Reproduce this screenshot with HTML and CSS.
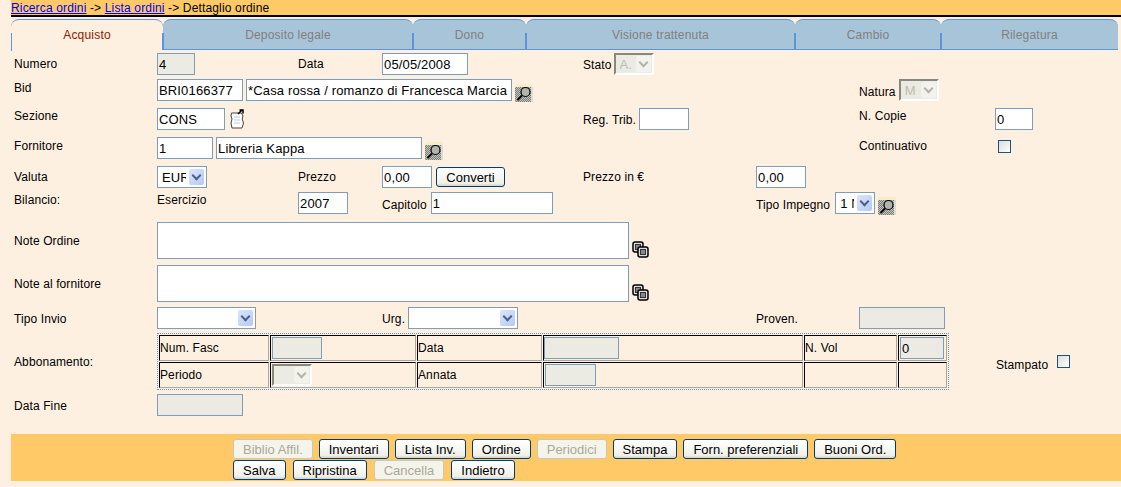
FILE: index.html
```html
<!DOCTYPE html>
<html lang="it">
<head>
    <meta charset="UTF-8">
    <title>Dettaglio ordine</title>
    <link rel="stylesheet" href="styles.css">
</head>
<body>
    <svg class="defs" width="0" height="0">
        <pattern id="dots" width="2" height="2" patternUnits="userSpaceOnUse">
            <rect width="2" height="2" fill="#c4c4be"/>
            <rect width="1" height="1" fill="#7d7d78"/>
            <rect x="1" y="1" width="1" height="1" fill="#7d7d78"/>
        </pattern>
        <symbol id="lens" viewBox="0 0 18 18">
            <rect width="18" height="18" fill="url(#dots)"/>
            <rect width="18" height="3" fill="#f5eec8"/>
            <rect x="16" y="3" width="2" height="15" fill="#dcdcd4"/>
            <circle cx="10.500" cy="8" r="4.500" fill="#b4b4ae" stroke="#000" stroke-width="1.200"/>
            <path d="M7 11.500 2.500 16" stroke="#000" stroke-width="2"/>
        </symbol>
        <symbol id="note" viewBox="0 0 15 20">
            <path d="M1.500 4h10l1.500 3-.8 3 1.300 4-1.500 5H2l-1-5 1-4-1-3z" fill="#fff" stroke="#444"/>
            <path d="M4 8h6M4 11h6M4 14h6" stroke="#bcd" stroke-width="1"/>
            <path d="M8 5 12 1M9.500 1H13v3.500" stroke="#000" stroke-width="1.500" fill="none"/>
        </symbol>
        <symbol id="copy" viewBox="0 0 17 17">
            <rect x="1" y="1" width="10" height="10" rx="2" fill="#ddd" stroke="#000" stroke-width="1.500"/>
            <rect x="3.500" y="3.500" width="5" height="5" fill="#888" stroke="#333"/>
            <rect x="6" y="6" width="10" height="10" rx="2" fill="#ddd" stroke="#000" stroke-width="1.500"/>
            <rect x="8.500" y="8.500" width="5" height="5" fill="#888" stroke="#333"/>
        </symbol>
    </svg>

    <div class="crumbs">
        <a href="#">Ricerca ordini</a> -&gt; <a href="#">Lista ordini</a> -&gt; Dettaglio ordine
    </div>

    <div class="tabs">
        <div class="tab active t1">Acquisto</div>
        <div class="tab t2">Deposito legale</div>
        <div class="tab t3">Dono</div>
        <div class="tab t4">Visione trattenuta</div>
        <div class="tab t5">Cambio</div>
        <div class="tab t6">Rilegatura</div>
    </div>

    <form class="form">
        <!-- riga 1 -->
        <label class="c1 r1">Numero</label>
        <div class="c2 r1"><input class="w38 off" value="4"></div>
        <label class="c3 r1">Data</label>
        <div class="c4 r1"><input class="w86" value="05/05/2008"></div>
        <div class="c5 r1 line snug"><label>Stato</label><span class="sel off w40"><select disabled><option>A.A</option></select><i class="arrow"></i></span></div>

        <!-- riga 2 -->
        <label class="c1 r2">Bid</label>
        <div class="c2-5 r2 line">
            <input class="w86" value="BRI0166377">
            <input class="w266" value="*Casa rossa / romanzo di Francesca Marcia">
            <svg class="lens"><use href="#lens"/></svg>
        </div>
        <div class="c7 r2 line low"><label>Natura</label><span class="sel off w40"><select disabled><option>M</option></select><i class="arrow"></i></span></div>

        <!-- riga 3 -->
        <label class="c1 r3">Sezione</label>
        <div class="c2 r3 line"><input class="w68" value="CONS"><svg class="note"><use href="#note"/></svg></div>
        <div class="c5 r3 line"><label>Reg. Trib.</label><input class="w50"></div>
        <label class="c7 r3">N. Copie</label>
        <div class="c8 r3"><input class="w38" value="0"></div>

        <!-- riga 4 -->
        <label class="c1 r4">Fornitore</label>
        <div class="c2-5 r4 line">
            <input class="w56" value="1">
            <input class="w206" value="Libreria Kappa">
            <svg class="lens"><use href="#lens"/></svg>
        </div>
        <label class="c7 r4">Continuativo</label>
        <div class="c8 r4"><span class="check"></span></div>

        <!-- riga 5 -->
        <label class="c1 r5">Valuta</label>
        <div class="c2 r5"><span class="sel w50"><select><option>EUR</option></select><i class="arrow"></i></span></div>
        <label class="c3 r5">Prezzo</label>
        <div class="c4 r5 line"><input class="w50" value="0,00"><button type="button" class="btn conv">Converti</button></div>
        <label class="c5 r5">Prezzo in €</label>
        <div class="c6 r5"><input class="w50" value="0,00"></div>

        <!-- riga 6 -->
        <label class="c1 r6">Bilancio:</label>
        <label class="c2 r6">Esercizio</label>
        <div class="c3 r6"><input class="w50" value="2007"></div>
        <div class="c4 r6 line low wide1"><label>Capitolo</label><input class="w122" value="1"></div>
        <div class="c6-7 r6 line low wide2"><label>Tipo Impegno</label><span class="sel w40"><select><option>1 N</option></select><i class="arrow"></i></span><svg class="lens"><use href="#lens"/></svg></div>

        <!-- note -->
        <label class="c1 r7 mid">Note Ordine</label>
        <div class="c2-5 r7 line"><textarea></textarea><svg class="copy"><use href="#copy"/></svg></div>
        <label class="c1 r8 mid">Note al fornitore</label>
        <div class="c2-5 r8 line"><textarea></textarea><svg class="copy"><use href="#copy"/></svg></div>

        <!-- invio -->
        <label class="c1 r9">Tipo Invio</label>
        <div class="c2 r9"><span class="sel w99"><select><option></option></select><i class="arrow"></i></span></div>
        <div class="c4 r9 line"><label>Urg.</label><span class="sel w110"><select><option></option></select><i class="arrow"></i></span></div>
        <label class="c6 r9">Proven.</label>
        <div class="c7 r9"><input class="w86 off"></div>

        <!-- abbonamento -->
        <label class="c1 r10 mid">Abbonamento:</label>
        <div class="c2-7 r10">
            <table class="abbo">
                <tr>
                    <td class="k1">Num. Fasc</td>
                    <td class="k2"><input class="w50 off"></td>
                    <td class="k3">Data</td>
                    <td class="k4"><input class="w75 off"></td>
                    <td class="k5">N. Vol</td>
                    <td class="k6"><input class="w44 off" value="0"></td>
                </tr>
                <tr>
                    <td>Periodo</td>
                    <td><span class="sel off w40"><select disabled><option></option></select><i class="arrow"></i></span></td>
                    <td>Annata</td>
                    <td><input class="w51 off"></td>
                    <td></td>
                    <td></td>
                </tr>
            </table>
        </div>
        <div class="c8 r10 line stamp"><label>Stampato</label><span class="check"></span></div>

        <label class="c1 r11">Data Fine</label>
        <div class="c2 r11"><input class="w86 off"></div>
    </form>

    <div class="actions">
        <div class="btn-row">
            <button type="button" class="btn" disabled>Biblio Affil.</button>
            <button type="button" class="btn">Inventari</button>
            <button type="button" class="btn">Lista Inv.</button>
            <button type="button" class="btn">Ordine</button>
            <button type="button" class="btn" disabled>Periodici</button>
            <button type="button" class="btn">Stampa</button>
            <button type="button" class="btn">Forn. preferenziali</button>
            <button type="button" class="btn">Buoni Ord.</button>
        </div>
        <div class="btn-row second">
            <button type="button" class="btn">Salva</button>
            <button type="button" class="btn">Ripristina</button>
            <button type="button" class="btn" disabled>Cancella</button>
            <button type="button" class="btn">Indietro</button>
        </div>
    </div>
</body>
</html>
```

FILE: styles.css
```css
* {
    box-sizing: border-box;
}
html, body {
    height: 100%;
}
body {
    margin: 0 0 0 11px;
    background: #fef0e0;
    font-family: "Liberation Sans", Arial, sans-serif;
    font-size: 12px;
    letter-spacing: 0.1px;
    color: #000;
    overflow: hidden;
}
.defs {
    display: block;
    height: 0;
}

/* testata */
.crumbs {
    height: 18px;
    line-height: 16px;
    letter-spacing: 0.15px;
    background: linear-gradient(#fec966 15px, #000 15px, #000 17px, #fef0e0 17px);
}
.crumbs a {
    color: #0000ee;
}

/* tab */
.tabs {
    display: flex;
    height: 32px;
    padding-top: 1px;
}
.tab {
    position: relative;
    height: 31px;
    line-height: 30px;
    letter-spacing: 0.2px;
    text-align: center;
    background: #a8c4d8;
    color: #808080;
    border-top: 1px solid #5b96dc;
    border-bottom: 1px solid #5b96dc;
    border-radius: 8px 8px 0 0;
}
.tab::before {
    content: "";
    position: absolute;
    left: -1px;
    top: 13px;
    bottom: -1px;
    width: 2px;
    background: #5b96dc;
}
.tab.active {
    background: #fef0e0;
    color: #8b1a00;
    border-bottom: 0;
}
.tab.t1::before {
    left: 0;
    width: 1px;
}
.t1 { width: 152px; }
.t2 { width: 250px; }
.t3 { width: 113px; }
.t4 { width: 269px; }
.t5 { width: 146px; }
.t6 { width: 177px; }

/* griglia del form */
.form {
    display: grid;
    grid-template-columns: 143px 141px 84px 201px 173px 103px 136px 115px;
    grid-template-rows: 26px 29px 29px 29px 26px 30px 43px 42px 26px 61px 40px;
    padding-left: 3px;
    padding-top: 3px;
}
.form label {
    line-height: 17px;
    white-space: nowrap;
}
.c1 { grid-column: 1; }
.c2 { grid-column: 2; }
.c3 { grid-column: 3; }
.c4 { grid-column: 4 / span 2; }
.c5 { grid-column: 5; }
.c6 { grid-column: 6; }
.c7 { grid-column: 7; }
.c8 { grid-column: 8; }
.c2-5 { grid-column: 2 / span 4; }
.c6-7 { grid-column: 6 / span 2; }
.c2-7 { grid-column: 2 / span 6; }
.r1 { grid-row: 1; }
.r2 { grid-row: 2; }
.r3 { grid-row: 3; }
.r4 { grid-row: 4; }
.r5 { grid-row: 5; }
.r6 { grid-row: 6; }
.r7 { grid-row: 7; }
.r8 { grid-row: 8; }
.r9 { grid-row: 9; }
.r10 { grid-row: 10; }
.r11 { grid-row: 11; }
.form > label { padding-top: 3px; }
.form > label.r2, .form > label.r4 { padding-top: 1px; }
.form > label.r3, .form > label.r6 { padding-top: 0; }
.form > label.r9, .form > label.r11 { padding-top: 4px; }
.form > label.r7, .form > label.r8 { padding-top: 11px; }
.form > label.r10 { padding-top: 21px; }
.line {
    display: flex;
    align-items: flex-start;
    gap: 3px;
}
.line > label {
    padding-top: 4px;
}
.line.low > label {
    padding-top: 5px;
}
.line.snug > label { margin-right: -1px; }
.line.wide1 > label { margin-right: 1px; }
.line.wide2 > label { margin-right: 2px; }

/* campi */
input, textarea, select {
    font-family: "Liberation Sans", Arial, sans-serif;
    font-size: 13px;
    letter-spacing: 0.15px;
    color: #000;
}
input {
    display: block;
    height: 22px;
    padding: 0 1px;
    background: #fff;
    border: 1px solid #7f9db9;
    border-radius: 0;
}
input.off, .sel.off {
    background: #ebebe4;
}
textarea {
    display: block;
    width: 472px;
    height: 37px;
    border: 1px solid #7f9db9;
    background: #fff;
    resize: none;
}
.w38 { width: 38px; }
.w40 { width: 40px; }
.w44 { width: 44px; }
.w50 { width: 50px; }
.w51 { width: 51px; }
.w56 { width: 56px; }
.w68 { width: 68px; }
.w75 { width: 75px; }
.w86 { width: 86px; }
.w99 { width: 99px; }
.w110 { width: 110px; }
.w122 { width: 122px; }
.w206 { width: 206px; }
.w266 { width: 266px; }

.sel {
    position: relative;
    display: block;
    height: 22px;
    background: #fff;
    border: 1px solid #7f9db9;
}
.sel select {
    display: block;
    width: 100%;
    height: 20px;
    padding: 0 20px 0 4px;
    border: 0;
    background: transparent;
    appearance: none;
}
.sel .arrow {
    position: absolute;
    top: 2px;
    right: 2px;
    width: 15px;
    height: 16px;
    border-radius: 2px;
    background: linear-gradient(135deg, #dce6fb, #b4c9f5);
}
.sel .arrow::after {
    content: "";
    position: absolute;
    left: 4px;
    top: 3px;
    width: 5px;
    height: 5px;
    border-right: 2px solid #4d6185;
    border-bottom: 2px solid #4d6185;
    transform: rotate(45deg);
}
.sel.off {
    border: 2px solid #8a877c;
    border-right-color: #fff;
    border-bottom-color: #fff;
}
.sel.off select {
    color: #aca899;
    height: 18px;
}
.sel.off .arrow {
    top: 1px;
    right: 1px;
    background: #f3f3ee;
}
.sel.off .arrow::after {
    border-color: #b5b2a6;
}

.lens {
    width: 18px;
    height: 18px;
    margin-top: 5px;
}
.note {
    width: 15px;
    height: 20px;
    margin: 1px 0 0 2px;
}
.copy {
    width: 17px;
    height: 17px;
    margin-top: 19px;
}
.check {
    display: block;
    width: 13px;
    height: 13px;
    margin: 3px 0 0 3px;
    border: 1px solid #1c5180;
    background: linear-gradient(135deg, #dcdcd7, #fff);
}

/* tabella abbonamento */
.abbo {
    width: 792px;
    height: 57px;
    border: 1px dotted #5b96dc;
    border-spacing: 1px;
    table-layout: fixed;
}
.abbo td {
    padding: 0;
    height: 26px;
    border: 1px solid;
    border-color: #000 #aca899 #aca899 #000;
    vertical-align: middle;
}
.abbo td > input, .abbo td > .sel {
    margin-left: 1px;
}
.abbo .k4 > input {
    margin-left: 0;
}
.k1 { width: 110px; }
.k2 { width: 146px; }
.k3 { width: 125px; }
.k4 { width: 260px; }
.k5 { width: 93px; }
.k6 { width: 49px; }
.stamp {
    padding: 18px 0 0 1px;
    gap: 5px;
}
.stamp > label {
    padding-top: 6px;
}
.stamp .check {
    margin: 4px 0 0 4px;
}

/* pulsanti */
.btn {
    height: 20px;
    padding: 0 9px;
    font-family: "Liberation Sans", Arial, sans-serif;
    font-size: 13px;
    letter-spacing: 0;
    color: #000;
    border: 1px solid #003c74;
    border-radius: 3px;
    background: linear-gradient(#fff, #f0f0ea 85%, #d6d0c5);
}
.btn:disabled {
    color: #aca899;
    border-color: #c9c7ba;
    background: #f5f4ea;
}
.conv {
    width: 69px;
    margin: 1px 0 0 1px;
    padding: 0;
}
.actions {
    height: 47px;
    padding: 5px 0 0 222px;
    background: #fec966;
}
.btn-row {
    display: flex;
    gap: 6px;
    height: 21px;
}
.btn-row.second {
    gap: 7px;
}
```
